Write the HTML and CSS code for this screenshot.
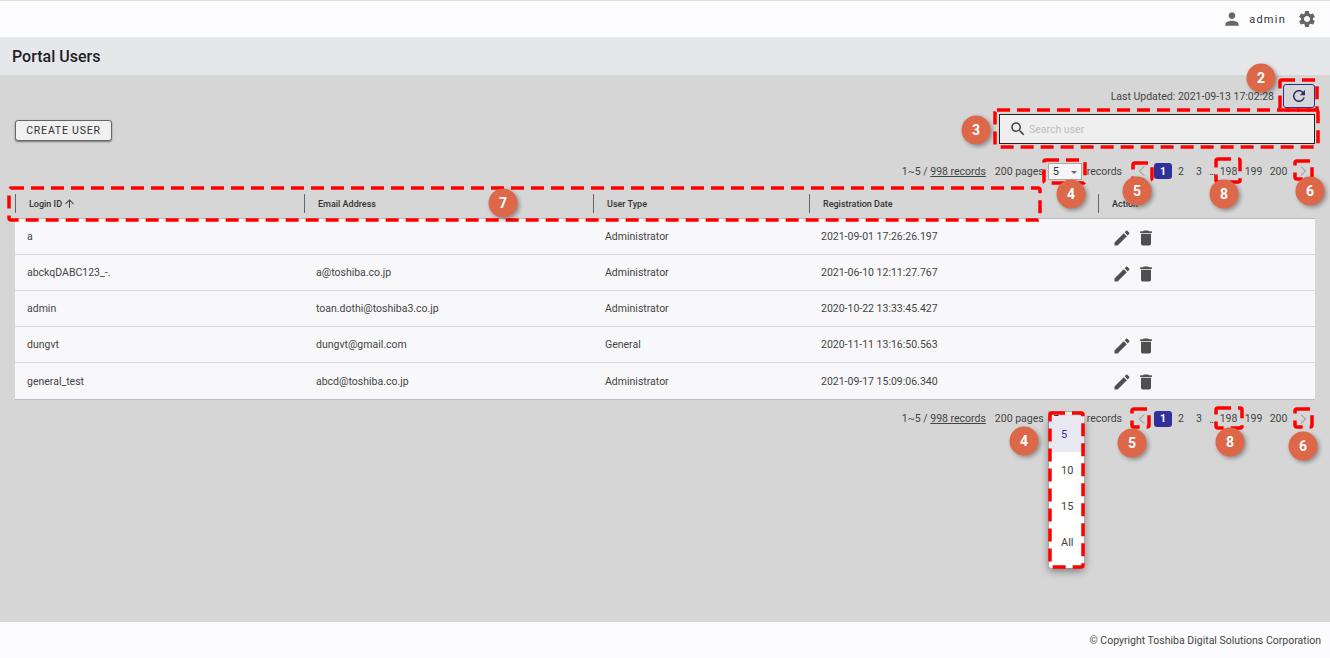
FILE: index.html
```html
<!DOCTYPE html>
<html lang="en">
<head>
<meta charset="utf-8">
<title>Portal Users</title>
<link rel="stylesheet" href="styles.css">
</head>
<body>
<svg class="defs" aria-hidden="true">
  <symbol id="i-person" viewBox="0 0 24 24"><path d="M12 12c2.21 0 4-1.79 4-4s-1.79-4-4-4-4 1.79-4 4 1.79 4 4 4zm0 2c-2.67 0-8 1.34-8 4v2h16v-2c0-2.66-5.33-4-8-4z"/></symbol>
  <symbol id="i-gear" viewBox="0 0 24 24"><path d="M19.14 12.94c.04-.3.06-.61.06-.94 0-.32-.02-.64-.07-.94l2.03-1.58c.18-.14.23-.41.12-.61l-1.92-3.32c-.12-.22-.37-.29-.59-.22l-2.39.96c-.5-.38-1.03-.7-1.62-.94l-.36-2.54c-.04-.24-.24-.41-.48-.41h-3.84c-.24 0-.43.17-.47.41l-.36 2.54c-.59.24-1.13.57-1.62.94l-2.39-.96c-.22-.08-.47 0-.59.22L2.74 8.87c-.12.21-.08.47.12.61l2.03 1.58c-.05.3-.09.63-.09.94s.02.64.07.94l-2.03 1.58c-.18.14-.23.41-.12.61l1.92 3.32c.12.22.37.29.59.22l2.39-.96c.5.38 1.03.7 1.62.94l.36 2.54c.05.24.24.41.48.41h3.84c.24 0 .44-.17.47-.41l.36-2.54c.59-.24 1.13-.56 1.62-.94l2.39.96c.22.08.47 0 .59-.22l1.92-3.32c.12-.22.07-.47-.12-.61l-2.01-1.58zM12 15.6c-1.98 0-3.6-1.62-3.6-3.6s1.62-3.6 3.6-3.6 3.6 1.62 3.6 3.6-1.62 3.6-3.6 3.6z"/></symbol>
  <symbol id="i-search" viewBox="0 0 24 24"><path d="M15.5 14h-.79l-.28-.27C15.41 12.59 16 11.11 16 9.5 16 5.91 13.09 3 9.5 3S3 5.91 3 9.5 5.91 16 9.5 16c1.61 0 3.09-.59 4.23-1.57l.27.28v.79l5 4.99L20.49 19l-4.99-5zm-6 0C7.01 14 5 11.99 5 9.5S7.01 5 9.5 5 14 7.01 14 9.5 11.99 14 9.5 14z"/></symbol>
  <symbol id="i-refresh" viewBox="0 0 24 24"><path d="M17.65 6.35C16.2 4.9 14.21 4 12 4c-4.42 0-7.99 3.58-7.99 8s3.57 8 7.99 8c3.73 0 6.84-2.55 7.73-6h-2.08c-.82 2.33-3.04 4-5.65 4-3.31 0-6-2.69-6-6s2.69-6 6-6c1.66 0 3.14.69 4.22 1.78L13 11h7V4l-2.35 2.35z"/></symbol>
  <symbol id="i-edit" viewBox="0 0 24 24"><path d="M3 17.25V21h3.75L17.81 9.94l-3.75-3.75L3 17.25zM20.71 7.04c.39-.39.39-1.02 0-1.41l-2.34-2.34c-.39-.39-1.02-.39-1.41 0l-1.83 1.83 3.75 3.75 1.83-1.83z"/></symbol>
  <symbol id="i-delete" viewBox="0 0 24 24"><path d="M6 19c0 1.1.9 2 2 2h8c1.1 0 2-.9 2-2V7H6v12zM19 4h-3.5l-1-1h-5l-1 1H5v2h14V4z"/></symbol>
  <symbol id="i-up" viewBox="0 0 24 24"><path d="M4 12l1.41 1.41L11 7.83V20h2V7.83l5.58 5.59L20 12l-8-8-8 8z"/></symbol>
  <symbol id="i-prev" viewBox="0 0 12 12"><path d="M8 1.5 3.5 6 8 10.500" fill="none" stroke="currentColor" stroke-width="1"/></symbol>
  <symbol id="i-next" viewBox="0 0 12 12"><path d="M4 1.500 8.500 6 4 10.500" fill="none" stroke="currentColor" stroke-width="1"/></symbol>
</svg>

<header class="topbar">
  <svg class="ico ico-person"><use href="#i-person"/></svg>
  <span class="username">admin</span>
  <svg class="ico ico-gear"><use href="#i-gear"/></svg>
</header>

<div class="titlebar"><h1>Portal Users</h1></div>

<main class="content">
  <div class="update-row">
    <span class="updated">Last Updated: 2021-09-13 17:02:28</span>
    <button class="refresh"><svg class="ico ico-refresh"><use href="#i-refresh"/></svg></button>
  </div>

  <div class="action-row">
    <button class="create">CREATE USER</button>
    <div class="search">
      <svg class="ico ico-search"><use href="#i-search"/></svg>
      <span class="placeholder">Search user</span>
    </div>
  </div>

  <div class="pager pager-top">
    <span class="range">1~5 / <u>998 records</u></span>
    <span class="pages">200 pages</span>
    <span class="select">5<i class="caret"></i></span>
    <span class="per">records</span>
    <span class="pg nav"><svg class="chev"><use href="#i-prev"/></svg></span>
    <span class="pg current">1</span>
    <span class="pg">2</span>
    <span class="pg">3</span>
    <span class="dots">...</span>
    <span class="pg wide">198</span>
    <span class="pg wide">199</span>
    <span class="pg wide">200</span>
    <span class="pg nav next"><svg class="chev"><use href="#i-next"/></svg></span>
  </div>

  <table class="users">
    <thead>
      <tr>
        <th class="c1"><span>Login ID<svg class="ico ico-up"><use href="#i-up"/></svg></span></th>
        <th class="c2"><span>Email Address</span></th>
        <th class="c3"><span>User Type</span></th>
        <th class="c4"><span>Registration Date</span></th>
        <th class="c5"><span>Action</span></th>
      </tr>
    </thead>
    <tbody>
      <tr>
        <td>a</td><td></td><td>Administrator</td><td>2021-09-01 17:26:26.197</td>
        <td class="acts"><svg class="ico ico-act"><use href="#i-edit"/></svg><svg class="ico ico-act"><use href="#i-delete"/></svg></td>
      </tr>
      <tr>
        <td>abckqDABC123_-.</td><td>a@toshiba.co.jp</td><td>Administrator</td><td>2021-06-10 12:11:27.767</td>
        <td class="acts"><svg class="ico ico-act"><use href="#i-edit"/></svg><svg class="ico ico-act"><use href="#i-delete"/></svg></td>
      </tr>
      <tr>
        <td>admin</td><td>toan.dothi@toshiba3.co.jp</td><td>Administrator</td><td>2020-10-22 13:33:45.427</td>
        <td class="acts"></td>
      </tr>
      <tr>
        <td>dungvt</td><td>dungvt@gmail.com</td><td>General</td><td>2020-11-11 13:16:50.563</td>
        <td class="acts"><svg class="ico ico-act"><use href="#i-edit"/></svg><svg class="ico ico-act"><use href="#i-delete"/></svg></td>
      </tr>
      <tr class="last">
        <td>general_test</td><td>abcd@toshiba.co.jp</td><td>Administrator</td><td>2021-09-17 15:09:06.340</td>
        <td class="acts"><svg class="ico ico-act"><use href="#i-edit"/></svg><svg class="ico ico-act"><use href="#i-delete"/></svg></td>
      </tr>
    </tbody>
  </table>

  <div class="pager pager-bottom">
    <span class="range">1~5 / <u>998 records</u></span>
    <span class="pages">200 pages</span>
    <span class="select">5<i class="caret"></i></span>
    <span class="per">records</span>
    <span class="pg nav"><svg class="chev"><use href="#i-prev"/></svg></span>
    <span class="pg current">1</span>
    <span class="pg">2</span>
    <span class="pg">3</span>
    <span class="dots">...</span>
    <span class="pg wide">198</span>
    <span class="pg wide">199</span>
    <span class="pg wide">200</span>
    <span class="pg nav next"><svg class="chev"><use href="#i-next"/></svg></span>
  </div>
</main>

<footer class="footer">© Copyright Toshiba Digital Solutions Corporation</footer>

<ul class="menu">
  <li class="sel">5</li>
  <li>10</li>
  <li>15</li>
  <li>All</li>
</ul>

<svg class="notes" width="1330" height="658" viewBox="0 0 1330 658">
  <g class="boxes">
    <rect x="1280" y="80" width="37" height="30"/>
    <rect x="995" y="110" width="323" height="37"/>
    <rect x="1044" y="160" width="41" height="23"/>
    <rect x="1133" y="163" width="19" height="17"/>
    <rect x="1216" y="159" width="24" height="23"/>
    <rect x="1295" y="161" width="17" height="18"/>
    <rect x="9" y="188" width="1031" height="32"/>
    <rect x="1050" y="413" width="33" height="154"/>
    <rect x="1132" y="409" width="17" height="18"/>
    <rect x="1216" y="408" width="26" height="20"/>
    <rect x="1295" y="409" width="17" height="18"/>
  </g>
  <g class="badges">
    <g><circle cx="1261" cy="78" r="14.500"/><text x="1261" y="83">2</text></g>
    <g><circle cx="976" cy="130" r="14.500"/><text x="976" y="135">3</text></g>
    <g><circle cx="1071" cy="194" r="14.500"/><text x="1071" y="199">4</text></g>
    <g><circle cx="1137" cy="191" r="14.500"/><text x="1137" y="196">5</text></g>
    <g><circle cx="1224" cy="194" r="14.500"/><text x="1224" y="199">8</text></g>
    <g><circle cx="1310" cy="191" r="14.500"/><text x="1310" y="196">6</text></g>
    <g><circle cx="503" cy="203" r="14.500"/><text x="503" y="208">7</text></g>
    <g><circle cx="1024" cy="441" r="14.500"/><text x="1024" y="446">4</text></g>
    <g><circle cx="1132" cy="443" r="14.500"/><text x="1132" y="448">5</text></g>
    <g><circle cx="1230" cy="442" r="14.500"/><text x="1230" y="447">8</text></g>
    <g><circle cx="1303" cy="446" r="14.500"/><text x="1303" y="451">6</text></g>
  </g>
</svg>
</body>
</html>
```

FILE: styles.css
```css
* { box-sizing: border-box; }
html, body { margin: 0; height: 100%; }
body {
  position: relative;
  width: 1330px;
  height: 658px;
  overflow: hidden;
  display: flex;
  flex-direction: column;
  font-family: Roboto, "Liberation Sans", sans-serif;
  font-size: 11px;
  color: #3c3c3c;
  background: #d6d6d6;
}
.defs { position: absolute; width: 0; height: 0; }
.ico { display: block; fill: #555; flex: none; }

.topbar {
  height: 37px;
  flex: none;
  display: flex;
  align-items: center;
  justify-content: flex-end;
  background: #fdfdff;
  border-top: 1px solid #dedede;
  padding-right: 13px;
}
.ico-person { width: 20px; height: 20px; fill: #666; margin-right: 7px; }
.username { font-size: 11px; letter-spacing: 1.25px; color: #333; margin-right: 11px; }
.ico-gear { width: 20px; height: 20px; fill: #666; }

.titlebar {
  height: 38px;
  flex: none;
  display: flex;
  align-items: center;
  padding-left: 12px;
  background: #e6e7eb;
}
.titlebar h1 { margin: 0; font-size: 16px; font-weight: 500; color: #1f1f1f; }

.content { flex: 1; padding: 9px 15px 0; background: #d6d6d6; }

.update-row { display: flex; justify-content: flex-end; align-items: center; height: 24px; }
.updated { margin-right: 9px; margin-top: 1px; font-size: 10.500px; color: #444; }
.refresh {
  width: 32px;
  height: 24px;
  padding: 0;
  display: flex;
  align-items: center;
  justify-content: center;
  background: transparent;
  border: 1px solid #2d2d8c;
  border-radius: 3px;
}
.ico-refresh { width: 18px; height: 18px; fill: #2d2d6e; }

.action-row {
  display: flex;
  justify-content: space-between;
  align-items: center;
  height: 30px;
  margin-top: 6px;
}
.create {
  width: 97px;
  height: 21px;
  margin-top: 2px;
  padding: 0;
  font-family: inherit;
  font-size: 10.500px;
  letter-spacing: .8px;
  color: #333;
  background: #f1f1f1;
  border: 1px solid #666;
  border-radius: 3px;
  box-shadow: 0 1px 2px rgba(0,0,0,.45);
}
.search {
  width: 316px;
  height: 30px;
  display: flex;
  align-items: center;
  padding-left: 9px;
  background: #efefef;
  border: 1px solid #222;
}
.ico-search { width: 18px; height: 18px; fill: #444; margin-right: 2px; }
.placeholder { font-size: 10.500px; color: #bdbdbd; }

.pager {
  display: flex;
  justify-content: flex-end;
  align-items: center;
  height: 16px;
  padding-right: 3px;
  font-size: 10.500px;
  color: #444;
}
.pager-top { margin-top: 19px; }
.pager-bottom { margin-top: 11px; }
.range { margin-right: 9px; }
.range u { text-underline-offset: 1px; }
.pages { margin-right: 4px; }
.select {
  width: 34px;
  height: 17px;
  align-self: flex-start;
  display: flex;
  align-items: center;
  justify-content: space-between;
  padding: 0 4px;
  background: #f6f6f6;
  border: 1px solid #aaa;
  font-size: 11px;
  color: #333;
}
.caret {
  width: 0;
  height: 0;
  margin-top: 2px;
  border: 3.500px solid transparent;
  border-top-color: #666;
  border-bottom-width: 0;
}
.per { margin: 0 11px 0 5px; }
.pg {
  width: 18px;
  height: 16px;
  display: flex;
  align-items: center;
  justify-content: center;
  text-align: center;
}
.pg.wide { width: 25px; }
.pg.nav { margin-right: 3px; }
.pg.next { margin: 0 0 0 3px; }
.pg.current { background: #303099; color: #fff; font-weight: 700; border-radius: 3px; }
.dots { width: 8px; height: 16px; line-height: 18px; text-align: center; letter-spacing: -1px; overflow: hidden; }
.chev { width: 12px; height: 12px; color: #888; }

.users {
  width: 1300px;
  margin-top: 12px;
  border-collapse: collapse;
  table-layout: fixed;
}
.c1, .c2 { width: 289px; }
.c3 { width: 216px; }
.c4 { width: 289px; }
.c5 { width: auto; }
th {
  height: 27px;
  padding: 3px 0 0;
  vertical-align: top;
  font-size: 9px;
  font-weight: 500;
  text-align: left;
  color: #333;
  border-bottom: 1px solid #bbb;
}
th span {
  display: flex;
  align-items: center;
  height: 19px;
  padding-left: 13px;
  border-left: 1px solid #666;
}
.ico-up { width: 13px; height: 13px; fill: #444; margin-left: 1px; }
td {
  height: 36px;
  padding: 0 0 0 12px;
  font-size: 10.500px;
  color: #444;
  background: #f8f8fa;
  border-bottom: 1px solid #d9d9d9;
}
.last td { height: 37px; padding-top: 1px; border-bottom-color: #bbb; }
td.acts { padding: 3px 0 0 14px; }
.acts .ico { display: inline-block; vertical-align: middle; }
.ico-act { width: 20px; height: 20px; fill: #4f4f4f; margin-right: 4px; }

.footer {
  height: 36px;
  flex: none;
  display: flex;
  align-items: center;
  justify-content: flex-end;
  padding-right: 9px;
  background: #fcfcfe;
  font-size: 10.500px;
  color: #444;
}

.menu {
  position: absolute;
  left: 1049px;
  top: 416px;
  width: 35px;
  height: 152px;
  margin: 0;
  padding: 0;
  list-style: none;
  background: #fff;
  border-radius: 3px;
  box-shadow: 0 3px 8px rgba(0,0,0,.45);
  font-size: 11px;
  color: #444;
}
.menu li { height: 36px; display: flex; align-items: center; padding-left: 12px; }
.menu .sel { background: #e8e8f3; color: #303099; }

.notes { position: absolute; left: 0; top: 0; pointer-events: none; }
.boxes rect {
  fill: none;
  stroke: #ff0000;
  stroke-width: 3.500px;
  stroke-dasharray: 13 7;
  rx: 2px;
}
.badges circle {
  fill: #dc6749;
  filter: drop-shadow(2px 2px 2px rgba(0,0,0,.35));
}
.badges text {
  fill: #fff;
  font-family: Roboto, sans-serif;
  font-size: 14px;
  font-weight: 700;
  text-anchor: middle;
}
```
